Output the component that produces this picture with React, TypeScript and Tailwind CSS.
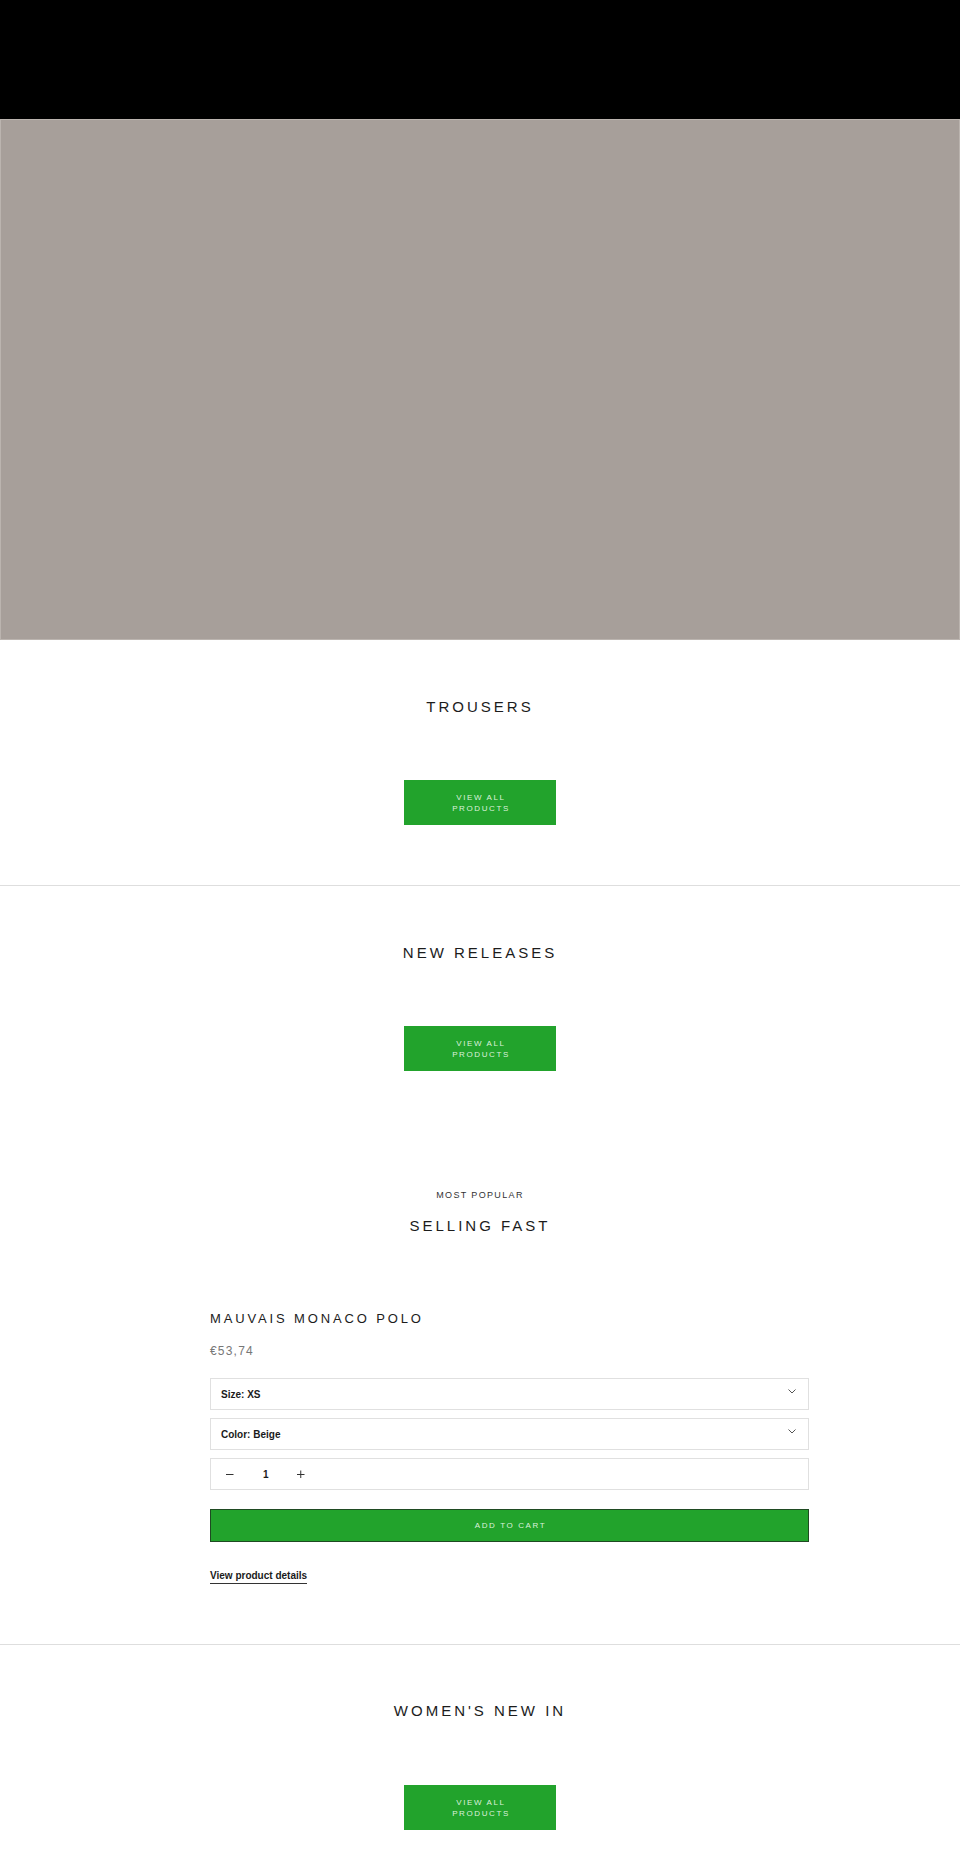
import React from 'react';

const FONT = "font-['Liberation_Sans',Arial,sans-serif]";

function ViewAllButton() {
  return (
    <a
      href="#"
      className="mx-auto flex h-[45px] w-[152px] flex-col items-center justify-center bg-[#22a32c] pl-[2px] text-[8px] leading-[11px] tracking-[0.2em] text-[#dcf1dc] uppercase"
    >
      <span>View all</span>
      <span>Products</span>
    </a>
  );
}

function Heading({ children }: { children: React.ReactNode }) {
  return (
    <h2 className="text-center text-[15px] leading-[22px] tracking-[0.2em] text-[#1c1c1c] uppercase">
      {children}
    </h2>
  );
}

function Chevron() {
  return (
    <svg
      className="absolute top-[10px] right-[12px]"
      width="8"
      height="5"
      viewBox="0 0 8 5"
      fill="none"
    >
      <path d="M0.5 0.5 L4 4 L7.5 0.5" stroke="#555" strokeWidth="1" />
    </svg>
  );
}

function SelectBox({ label, value }: { label: string; value: string }) {
  return (
    <div className="relative flex h-[32px] items-center border border-[#e0e0e0] pl-[10px] text-[10px] font-bold text-[#1a1a1a]">
      <span>
        {label}: {value}
      </span>
      <Chevron />
    </div>
  );
}

function QuantityBox() {
  return (
    <div className="flex h-[32px] items-center border border-[#e0e0e0] pl-[15px] text-[10px] font-bold text-[#1a1a1a]">
      <svg width="8" height="8" viewBox="0 0 8 8" fill="none">
        <path d="M0 4.5 H7.5" stroke="#333" strokeWidth="1" />
      </svg>
      <span className="ml-[29px] w-[6px]">1</span>
      <svg className="ml-[28px]" width="8" height="8" viewBox="0 0 8 8" fill="none">
        <path d="M0 4.5 H7.5 M3.75 0.5 V8" stroke="#333" strokeWidth="1" />
      </svg>
    </div>
  );
}

export default function App() {
  return (
    <div className={`min-h-[1875px] bg-white ${FONT}`}>
      {/* Top bar */}
      <header className="h-[119px] bg-black" />

      {/* Hero placeholder */}
      <div className="h-[521px] border border-[#bbb4af] bg-[#a79f9a]" />

      {/* Trousers */}
      <section className="pt-[56px] pb-[60px]">
        <Heading>Trousers</Heading>
        <div className="mt-[62px]">
          <ViewAllButton />
        </div>
      </section>

      {/* New releases */}
      <section className="border-t border-[#dedede] pt-[56px]">
        <Heading>New releases</Heading>
        <div className="mt-[62px]">
          <ViewAllButton />
        </div>
      </section>

      {/* Featured product */}
      <section className="pt-[117px] pb-[60px]">
        <p className="text-center text-[9px] leading-[14px] tracking-[0.15em] text-[#333] uppercase">
          Most popular
        </p>
        <div className="mt-[13px]">
          <Heading>Selling fast</Heading>
        </div>

        <div className="mt-[72px] ml-[210px] w-[599px]">
          <h3 className="text-[13px] leading-[20px] tracking-[0.22em] text-[#1c1c1c] uppercase">
            Mauvais Monaco Polo
          </h3>
          <p className="mt-[13px] text-[12px] leading-[18px] tracking-[0.1em] text-[#777]">€53,74</p>

          <div className="mt-[18px] flex flex-col gap-[8px]">
            <SelectBox label="Size" value="XS" />
            <SelectBox label="Color" value="Beige" />
            <QuantityBox />
          </div>

          <button className="mt-[19px] flex h-[33px] w-full items-center justify-center border border-[#1f4a22] bg-[#22a32c] pl-[2px] text-[8px] tracking-[0.2em] text-[#dcf1dc] uppercase">
            Add to cart
          </button>

          <a
            href="#"
            className="mt-[26px] block w-fit border-b border-[#333] text-[10px] leading-[15px] font-bold text-[#1a1a1a]"
          >
            View product details
          </a>
        </div>
      </section>

      {/* Women's new in */}
      <section className="border-t border-[#dedede] pt-[55px] pb-[45px]">
        <Heading>Women's new in</Heading>
        <div className="mt-[63px]">
          <ViewAllButton />
        </div>
      </section>
    </div>
  );
}
